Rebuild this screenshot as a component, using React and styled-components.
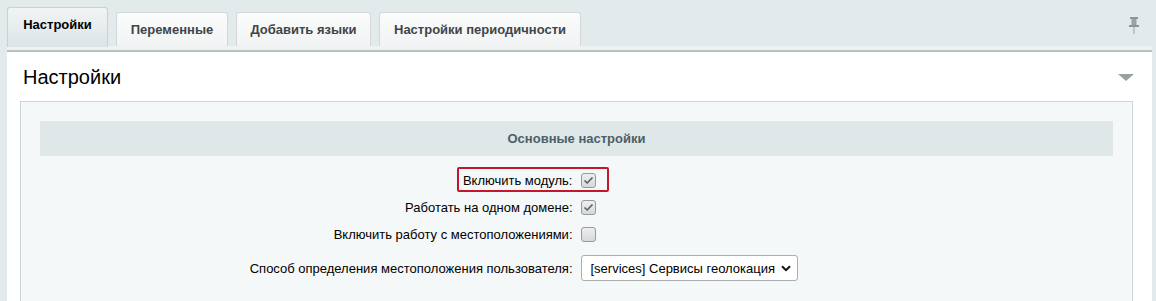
import styled, { createGlobalStyle } from 'styled-components';

const GlobalStyle = createGlobalStyle`
    html, body {
        margin: 0;
        padding: 0;
        background: #e3eaec;
        font-family: "Liberation Sans", Arial, sans-serif;
        font-size: 13px;
        color: #000;
    }
`;

const tabs = [
    { title: 'Настройки', width: 101 },
    { title: 'Переменные', width: 112 },
    { title: 'Добавить языки', width: 135 },
    { title: 'Настройки периодичности', width: 202 },
];

const rows = [
    { label: 'Включить модуль:', checked: true, highlight: true },
    { label: 'Работать на одном домене:', checked: true },
    { label: 'Включить работу с местоположениями:', checked: false },
];

const Check = ({ checked }) => (
    <CheckBox>
        {checked && (
            <svg width="11" height="9" viewBox="0 0 11 9">
                <path d="M1.5 4.5 L4.2 7 L9.5 1.5" fill="none" stroke="#5a5f62" strokeWidth="1.6" />
            </svg>
        )}
    </CheckBox>
);

const App = () => {
    return (
        <>
            <GlobalStyle />
            <Page>
                <TabBar>
                    {tabs.map((tab, index) => (
                        <Tab key={tab.title} $active={index === 0} $width={tab.width}>
                            {tab.title}
                        </Tab>
                    ))}
                    <Pin>
                        <svg width="12" height="17" viewBox="0 0 12 17">
                            <rect x="2" y="0" width="8" height="2" fill="#8d9598" />
                            <rect x="3.5" y="2" width="5" height="6" fill="#9aa2a5" />
                            <rect x="1" y="8" width="10" height="2" fill="#8d9598" />
                            <rect x="5.5" y="10" width="1" height="7" fill="#9aa2a5" />
                        </svg>
                    </Pin>
                </TabBar>
                <Strip />
                <Panel>
                    <Header>
                        <Title>Настройки</Title>
                        <Arrow />
                    </Header>
                    <Inner>
                        <Section>Основные настройки</Section>
                        <Form>
                            {rows.map(row => (
                                <Row key={row.label}>
                                    <Label>
                                        {row.highlight && <Highlight />}
                                        {row.label}
                                    </Label>
                                    <Control>
                                        <Check checked={row.checked} />
                                    </Control>
                                </Row>
                            ))}
                            <Row $select>
                                <Label>Способ определения местоположения пользователя:</Label>
                                <Control>
                                    <Select>
                                        <span>[services] Сервисы геолокация</span>
                                        <svg width="10" height="7" viewBox="0 0 10 7">
                                            <path d="M1 1.2 L5 5.2 L9 1.2" fill="none" stroke="#111" strokeWidth="2" />
                                        </svg>
                                    </Select>
                                </Control>
                            </Row>
                        </Form>
                    </Inner>
                </Panel>
            </Page>
        </>
    );
};
export default App;

const Page = styled.div`
    width: 1156px;
    height: 301px;
    overflow: hidden;
    padding: 0 4px 0 7px;
    box-sizing: border-box;
`;

const TabBar = styled.div`
    display: flex;
    align-items: flex-end;
    gap: 8px;
    height: 46px;
    position: relative;
`;

const Tab = styled.div`
    box-sizing: border-box;
    width: ${props => props.$width}px;
    height: ${props => (props.$active ? '40px' : '34px')};
    padding-bottom: ${props => (props.$active ? '6px' : '0')};
    margin-bottom: ${props => (props.$active ? '-1px' : '0')};
    display: flex;
    align-items: center;
    justify-content: center;
    white-space: nowrap;
    font-weight: bold;
    font-size: 13px;
    color: ${props => (props.$active ? '#000' : '#3f4548')};
    border: 1px solid ${props => (props.$active ? '#c9d1d3' : '#d3d9db')};
    border-bottom: none;
    border-radius: 3px 3px 0 0;
    background: ${props =>
        props.$active
            ? 'linear-gradient(to bottom, #f1f4f5 0%, #dde4e6 100%)'
            : 'linear-gradient(to bottom, #fbfcfc 0%, #f1f3f4 100%)'};
`;

const Pin = styled.div`
    position: absolute;
    right: 12px;
    top: 17px;
`;

const Strip = styled.div`
    height: 4px;
    background: #eef2f3;
    border-bottom: 2px solid #b6bfc2;
`;

const Panel = styled.div`
    background: #fff;
    padding: 0 19px 0 13px;
    height: 260px;
`;

const Header = styled.div`
    display: flex;
    align-items: center;
    justify-content: space-between;
    height: 49px;
    padding-left: 3px;
    margin-right: -1px;
`;

const Title = styled.div`
    font-size: 20px;
    color: #000;
    padding-top: 2px;
`;

const Arrow = styled.div`
    width: 0;
    height: 0;
    border-left: 8px solid transparent;
    border-right: 8px solid transparent;
    border-top: 7px solid #9a9fa1;
    margin-top: 2px;
`;

const Inner = styled.div`
    background: #f5f8f9;
    border: 1px solid #cdd6d9;
    border-bottom: none;
    padding: 19px 19px 0;
    height: 200px;
`;

const Section = styled.div`
    height: 35px;
    background: #e0e7e9;
    display: flex;
    align-items: center;
    justify-content: center;
    font-weight: bold;
    font-size: 13px;
    color: #4b6066;
`;

const Form = styled.div`
    padding-top: 11px;
    display: flex;
    flex-direction: column;
`;

const Row = styled.div`
    display: grid;
    grid-template-columns: 1fr 1fr;
    height: ${props => (props.$select ? '40px' : '27px')};
    align-items: center;
`;

const Label = styled.div`
    position: relative;
    text-align: right;
    padding-right: 4px;
    font-size: 13px;
    color: #000;
`;

const Highlight = styled.div`
    position: absolute;
    right: -32px;
    top: -6px;
    width: 148px;
    height: 21px;
    border: 2px solid #c4172c;
    border-radius: 2px;
`;

const Control = styled.div`
    display: flex;
    align-items: center;
    padding-left: 4px;
`;

const CheckBox = styled.div`
    width: 13px;
    height: 13px;
    border: 1px solid #969a9c;
    border-radius: 3px;
    background: linear-gradient(to bottom, #eceeef 0%, #d6d9da 100%);
    display: flex;
    align-items: center;
    justify-content: center;
`;

const Select = styled.div`
    box-sizing: border-box;
    width: 217px;
    height: 26px;
    border: 1px solid #a9aeb1;
    border-radius: 3px;
    background: #fff;
    display: flex;
    align-items: center;
    justify-content: space-between;
    padding: 0 6px 0 9px;
    font-size: 13px;
    color: #000;
`;
